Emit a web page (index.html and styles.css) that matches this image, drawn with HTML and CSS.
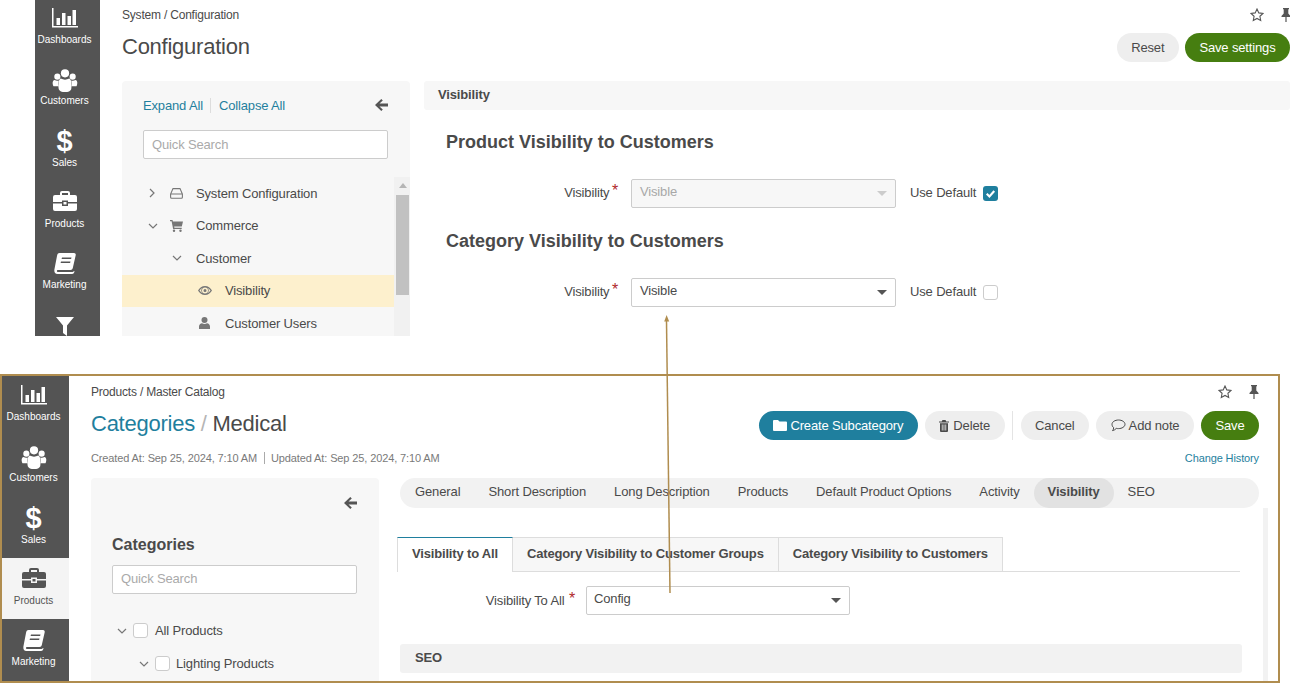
FILE: index.html
```html
<!DOCTYPE html>
<html>
<head>
    <title>Visibility configuration</title>
    <link rel="stylesheet" href="styles.css">
</head>
<body>
    <svg class="icon-defs" aria-hidden="true">
        <symbol id="i-bars" viewBox="0 0 26 20"><path d="M0 0h1.500v18H26v1.500H0zM4.500 10H8v7H4.500zM10 5h3.500v12H10zM15.500 8H19v9h-3.500zM20.500 2H24v15h-3.500z"/></symbol>
        <symbol id="i-users" viewBox="0 0 26 24"><circle cx="5" cy="8" r="3.200"/><circle cx="21" cy="8" r="3.200"/><circle cx="13" cy="4.500" r="4.300"/><path d="M1 18c-1.500-3-1-6 1-6.500 2 1 3 1 4.500.5-.8 2-1 4-.5 6zM25 18c1.500-3 1-6-1-6.500-2 1-3 1-4.500.5.800 2 1 4 .5 6zM6.500 21c-1-6 0-10 2-11 3 1.500 6 1.500 9 0 2 1 3 5 2 11-1 2-3 3-6.500 3s-5.500-1-6.500-3z"/></symbol>
        <symbol id="i-case" viewBox="0 0 24 20"><path fill-rule="evenodd" d="M7 4V2a2 2 0 0 1 2-2h6a2 2 0 0 1 2 2v2h5a2 2 0 0 1 2 2v5H15V9.500H9V11H0V6a2 2 0 0 1 2-2zm2-2v2h6V2zM0 12.500h9V15h6v-2.500h9V18a2 2 0 0 1-2 2H2a2 2 0 0 1-2-2zM10.500 11h3v2.500h-3z"/></symbol>
        <symbol id="i-book" viewBox="0 0 22 21"><path fill-rule="evenodd" d="M5.500 0H20c1.300 0 2 1 1.700 2.300L18.800 15c-.3 1.300-1 2-2.300 2H4c-1.500 0-1.500 2 0 2h14.500c.6 0 1-.2 1.200-.7l.8-.3c-.2 1.700-1 3-2.500 3H3.500C1 21 0 19 .4 16.500L3 3c.3-1.800 1-3 2.500-3zM8 4.500l-.4 1.500h9.500l.4-1.500zM7 8.500l-.4 1.500h9.500l.4-1.500z"/></symbol>
        <symbol id="i-filter" viewBox="0 0 18 19"><path d="M0 0h18l-7 8.500V19l-4-3V8.500z"/></symbol>
        <symbol id="i-star" viewBox="0 0 14 14"><path fill="none" stroke="currentColor" stroke-width="1.100" d="M7 1l1.800 3.900 4.200.5-3.100 2.900.8 4.200L7 10.400l-3.700 2.100.8-4.200L1 5.400l4.200-.5z"/></symbol>
        <symbol id="i-pin" viewBox="0 0 10 14"><path d="M2 0h6v1.200H7.300v4.300L9.500 8v1H5.600v5H4.400V9H.5V8l2.200-2.500V1.200H2z"/></symbol>
        <symbol id="i-back" viewBox="0 0 13 12"><path d="M6.300 0l1.500 1.500L4.500 4.400H13v3.200H4.500l3.300 2.900L6.300 12 0 6z"/></symbol>
        <symbol id="i-right" viewBox="0 0 8 10"><path fill="none" stroke="currentColor" stroke-width="1.200" d="M2 1l4 4-4 4"/></symbol>
        <symbol id="i-down" viewBox="0 0 10 8"><path fill="none" stroke="currentColor" stroke-width="1.200" d="M1 2l4 4 4-4"/></symbol>
        <symbol id="i-drive" viewBox="0 0 13 11"><path fill="none" stroke="currentColor" stroke-width="1.100" d="M3 .6h7l2.400 5.400v3.200a1 1 0 0 1-1 1H1.600a1 1 0 0 1-1-1V6zM.6 6h11.800"/></symbol>
        <symbol id="i-cart" viewBox="0 0 13 12"><path d="M0 0h2.500l.4 1.500H13l-1.200 5H4.200l.2 1.200h7.300V9H3.100L1.600 1.300H0z"/><circle cx="4" cy="10.800" r="1.200"/><circle cx="10.500" cy="10.800" r="1.200"/></symbol>
        <symbol id="i-eye" viewBox="0 0 14 9"><path fill-rule="evenodd" d="M7 0c3 0 5.500 2 7 4.500C12.500 7 10 9 7 9S1.500 7 0 4.500C1.500 2 4 0 7 0zm0 1.500a3 3 0 1 0 0 6 3 3 0 0 0 0-6zM1.500 4.500C2.300 5.700 3.300 6.600 4.500 7.200a4 4 0 0 1 0-5.400C3.300 2.400 2.300 3.300 1.500 4.500zm11 0c-.8-1.200-1.800-2.100-3-2.700a4 4 0 0 1 0 5.400c1.200-.6 2.200-1.500 3-2.700zM7 3a1.500 1.500 0 1 1 0 3 1.500 1.500 0 0 1 0-3z"/></symbol>
        <symbol id="i-user" viewBox="0 0 11 12"><circle cx="5.500" cy="3" r="3"/><path d="M0 12V9.500C0 7.500 1.500 6.500 3 6.300c1.500 1 3.500 1 5 0 1.500.2 3 1.200 3 3.200V12z"/></symbol>
        <symbol id="i-folder" viewBox="0 0 14 11"><path d="M1 0h4l1.500 1.500H13a1 1 0 0 1 1 1V10a1 1 0 0 1-1 1H1a1 1 0 0 1-1-1V1a1 1 0 0 1 1-1z"/></symbol>
        <symbol id="i-trash" viewBox="0 0 10 12"><path fill-rule="evenodd" d="M0 1.500h2.700L3.500 0h3l.8 1.500H10v1H0zM1 3.200h8V11a1 1 0 0 1-1 1H2a1 1 0 0 1-1-1zM2.800 4.500v6h.8v-6zM4.600 4.500v6h.8v-6zM6.400 4.500v6h.8v-6z"/></symbol>
        <symbol id="i-note" viewBox="0 0 15 13"><path fill="none" stroke="currentColor" stroke-width="1" d="M7.500 1C11 1 14 2.900 14 5.300S11 9.600 7.500 9.600c-.8 0-1.500 0-2.200-.2C4.300 10.600 3 11.300 1.500 11.600c.7-.8 1.200-1.700 1.200-2.900C1.600 7.900 1 6.700 1 5.300 1 2.900 4 1 7.500 1z"/></symbol>
    </svg>

    <section class="shot shot-config">
        <nav class="nav">
            <a class="nav-item"><svg class="nav-icon bars"><use href="#i-bars"/></svg>Dashboards</a>
            <a class="nav-item"><svg class="nav-icon users"><use href="#i-users"/></svg>Customers</a>
            <a class="nav-item"><span class="nav-icon dollar">$</span>Sales</a>
            <a class="nav-item"><svg class="nav-icon case"><use href="#i-case"/></svg>Products</a>
            <a class="nav-item"><svg class="nav-icon book"><use href="#i-book"/></svg>Marketing</a>
            <a class="nav-item"><svg class="nav-icon filter"><use href="#i-filter"/></svg></a>
        </nav>
        <div class="main">
            <div class="crumb-row">
                <span class="crumbs">System / Configuration</span>
                <span class="page-tools">
                    <svg class="tool-star"><use href="#i-star"/></svg>
                    <svg class="tool-pin"><use href="#i-pin"/></svg>
                </span>
            </div>
            <div class="title-row">
                <h1 class="page-title">Configuration</h1>
                <div class="actions">
                    <button class="btn">Reset</button>
                    <button class="btn btn-green">Save settings</button>
                </div>
            </div>
            <div class="config-body">
                <aside class="tree-panel">
                    <div class="tree-links">
                        <a>Expand All</a><a class="second-link">Collapse All</a>
                        <svg class="back-icon"><use href="#i-back"/></svg>
                    </div>
                    <div class="search-box">Quick Search</div>
                    <div class="tree-wrap">
                        <ul class="tree">
                            <li class="tree-row"><svg class="chev-r"><use href="#i-right"/></svg><svg class="tree-icon drive"><use href="#i-drive"/></svg>System Configuration</li>
                            <li class="tree-row"><svg class="chev-d"><use href="#i-down"/></svg><svg class="tree-icon cart"><use href="#i-cart"/></svg>Commerce</li>
                            <li class="tree-row level-2"><svg class="chev-d"><use href="#i-down"/></svg>Customer</li>
                            <li class="tree-row level-3 selected"><svg class="tree-icon eye"><use href="#i-eye"/></svg>Visibility</li>
                            <li class="tree-row level-3"><svg class="tree-icon user"><use href="#i-user"/></svg>Customer Users</li>
                        </ul>
                        <div class="scrollbar"><span class="scroll-up"></span><span class="scroll-thumb"></span></div>
                    </div>
                </aside>
                <div class="config-content">
                    <div class="section-bar">Visibility</div>
                    <h3 class="form-heading first">Product Visibility to Customers</h3>
                    <div class="form-row">
                        <label class="form-label">Visibility <i class="req">*</i></label>
                        <div class="select disabled">Visible<span class="caret"></span></div>
                        <span class="use-default">Use Default</span>
                        <span class="check checked"><svg viewBox="0 0 14 14"><path d="M3.500 7.200l2.500 2.500 4.500-5" fill="none" stroke="#fff" stroke-width="2"/></svg></span>
                    </div>
                    <h3 class="form-heading">Category Visibility to Customers</h3>
                    <div class="form-row">
                        <label class="form-label">Visibility <i class="req">*</i></label>
                        <div class="select">Visible<span class="caret"></span></div>
                        <span class="use-default">Use Default</span>
                        <span class="check"></span>
                    </div>
                </div>
            </div>
        </div>
    </section>

    <section class="shot shot-category">
        <nav class="nav">
            <a class="nav-item"><svg class="nav-icon bars"><use href="#i-bars"/></svg>Dashboards</a>
            <a class="nav-item"><svg class="nav-icon users"><use href="#i-users"/></svg>Customers</a>
            <a class="nav-item"><span class="nav-icon dollar">$</span>Sales</a>
            <a class="nav-item active"><svg class="nav-icon case"><use href="#i-case"/></svg>Products</a>
            <a class="nav-item"><svg class="nav-icon book"><use href="#i-book"/></svg>Marketing</a>
        </nav>
        <div class="main">
            <div class="crumb-row">
                <span class="crumbs">Products / Master Catalog</span>
                <span class="page-tools">
                    <svg class="tool-star"><use href="#i-star"/></svg>
                    <svg class="tool-pin"><use href="#i-pin"/></svg>
                </span>
            </div>
            <div class="title-row">
                <h1 class="page-title"><a class="title-link">Categories</a> <span class="title-sep">/</span> Medical</h1>
                <div class="actions">
                    <button class="btn btn-teal"><svg class="btn-icon folder"><use href="#i-folder"/></svg>Create Subcategory</button>
                    <button class="btn"><svg class="btn-icon trash"><use href="#i-trash"/></svg>Delete</button>
                    <span class="actions-sep"></span>
                    <button class="btn">Cancel</button>
                    <button class="btn"><svg class="btn-icon note"><use href="#i-note"/></svg>Add note</button>
                    <button class="btn btn-green">Save</button>
                </div>
            </div>
            <div class="meta-row">
                <span>Created At: Sep 25, 2024, 7:10 AM</span>
                <span class="meta-second">Updated At: Sep 25, 2024, 7:10 AM</span>
                <a class="history">Change History</a>
            </div>
            <div class="category-body">
                <aside class="tree-panel">
                    <div class="panel-back"><svg class="back-icon"><use href="#i-back"/></svg></div>
                    <h3 class="panel-heading">Categories</h3>
                    <div class="search-box">Quick Search</div>
                    <ul class="cat-tree">
                        <li class="cat-row"><svg class="chev-d"><use href="#i-down"/></svg><span class="check plain"></span>All Products</li>
                        <li class="cat-row sub"><svg class="chev-d"><use href="#i-down"/></svg><span class="check plain"></span>Lighting Products</li>
                    </ul>
                </aside>
                <div class="category-content">
                    <div class="pill-tabs">
                        <a class="pill-tab">General</a>
                        <a class="pill-tab">Short Description</a>
                        <a class="pill-tab">Long Description</a>
                        <a class="pill-tab">Products</a>
                        <a class="pill-tab">Default Product Options</a>
                        <a class="pill-tab">Activity</a>
                        <a class="pill-tab current">Visibility</a>
                        <a class="pill-tab">SEO</a>
                    </div>
                    <div class="pane">
                        <div class="sub-tabs">
                            <a class="sub-tab current">Visibility to All</a>
                            <a class="sub-tab">Category Visibility to Customer Groups</a>
                            <a class="sub-tab">Category Visibility to Customers</a>
                        </div>
                        <div class="form-row all-row">
                            <label class="form-label">Visibility To All <i class="req">*</i></label>
                            <div class="select">Config<span class="caret"></span></div>
                        </div>
                        <div class="seo-bar">SEO</div>
                    </div>
                </div>
            </div>
        </div>
    </section>

    <svg class="link-arrow" viewBox="0 0 12 282">
        <path d="M2.500 6L6 278" fill="none" stroke="#b08d4f" stroke-width="1.500"/>
        <path d="M2.600 0L.2 6.500h5z" fill="#b08d4f"/>
    </svg>
</body>
</html>
```

FILE: styles.css
```css
* {
    box-sizing: border-box;
}
html, body {
    margin: 0;
    height: 683px;
    overflow: hidden;
    background: #fff;
}
body {
    position: relative;
    font-family: "Liberation Sans", sans-serif;
    font-size: 13px;
    letter-spacing: -.15px;
    color: #4a4a4a;
}
ul {
    list-style: none;
    margin: 0;
    padding: 0;
}
h1, h3 {
    margin: 0;
}
.icon-defs {
    position: absolute;
    width: 0;
    height: 0;
}

/* the two screenshots sit on a free canvas */
.shot {
    position: absolute;
    display: flex;
    overflow: hidden;
    background: #fff;
}
.shot-config {
    left: 35px;
    top: 0;
    width: 1255px;
    height: 336px;
}
.shot-category {
    left: 0;
    top: 374px;
    width: 1280px;
    height: 309px;
    border: 2px solid #b08d4f;
}
.link-arrow {
    position: absolute;
    left: 664px;
    top: 315px;
    width: 12px;
    height: 282px;
}

/* side nav, cropped on the left in both pictures */
.nav {
    flex: none;
    display: flex;
    flex-direction: column;
    width: 71px;
    background: #545454;
}
.shot-config .nav {
    margin: -2.6px 0 0 -6px;
}
.shot-category .nav {
    margin: -1.6px 0 0 -4px;
}
.nav-item {
    flex: none;
    display: flex;
    flex-direction: column;
    align-items: center;
    height: 61.25px;
    font-size: 10px;
    letter-spacing: 0;
    color: #fff;
    fill: #fff;
}
.nav-item.active {
    background: #f4f4f4;
    color: #545454;
    fill: #545454;
}
.nav-icon {
    display: block;
}
.bars {
    width: 26px;
    height: 20px;
    margin: 11px 0 6px;
}
.users {
    width: 26px;
    height: 23px;
    margin: 10px 0 3px;
}
.dollar {
    height: 26px;
    margin: 8px 0 3px;
    font-size: 29px;
    line-height: 26px;
    font-weight: 700;
}
.case {
    width: 24px;
    height: 20px;
    margin: 10px 0 7px;
}
.book {
    width: 22px;
    height: 21px;
    margin: 11px 0 5px;
}
.filter {
    width: 18px;
    height: 19px;
    margin: 13px 0 0;
}

/* page header */
.main {
    flex: 1;
    min-width: 0;
    padding-left: 22px;
}
.shot-category .main {
    padding-right: 19px;
}
.crumb-row {
    display: flex;
    justify-content: space-between;
    align-items: center;
    height: 15px;
    margin-top: 7px;
    font-size: 12px;
    letter-spacing: -.2px;
}
.shot-category .crumb-row {
    margin-top: 8px;
}
.page-tools {
    display: flex;
    align-items: center;
    gap: 17px;
    fill: #555;
    color: #555;
}
.tool-star {
    width: 14px;
    height: 14px;
}
.tool-pin {
    width: 10px;
    height: 14px;
}
.shot-config .page-tools {
    margin-right: -1px;
}
.title-row {
    display: flex;
    justify-content: space-between;
    align-items: center;
    height: 29px;
    margin-top: 11px;
}
.shot-category .title-row {
    margin-top: 12px;
}
.page-title {
    padding-bottom: 2px;
    font-size: 22px;
    font-weight: 400;
    line-height: 27px;
    letter-spacing: -.25px;
}
.shot-category .page-title {
    padding-bottom: 4px;
}
.title-link {
    color: #1f7f9e;
}
.title-sep {
    color: #b5b5b5;
}
.actions {
    display: flex;
    align-items: center;
    gap: 7px;
}
.btn {
    display: flex;
    align-items: center;
    height: 29px;
    padding: 0 14.5px;
    border: none;
    border-radius: 15px;
    background: #eee;
    color: #4a4a4a;
    font-family: inherit;
    font-size: 13px;
    letter-spacing: inherit;
}
.btn-green {
    background: #467e10;
    color: #fff;
}
.btn-teal {
    background: #1f7f9e;
    color: #fff;
    fill: #fff;
}
.btn-icon {
    margin-right: 3px;
    fill: #4a4a4a;
    color: #4a4a4a;
}
.btn-teal .btn-icon {
    fill: #fff;
}
.folder {
    width: 14px;
    height: 11px;
}
.trash {
    width: 10px;
    height: 12px;
    margin-right: 4px;
}
.note {
    width: 15px;
    height: 13px;
    fill: none;
}
.actions-sep {
    width: 1px;
    height: 29px;
    margin-right: 1px;
    background: #e4e4e4;
}
.shot-config .actions {
    gap: 6px;
}
.meta-row {
    display: flex;
    align-items: center;
    height: 14px;
    margin-top: 11px;
    font-size: 11px;
    letter-spacing: -.12px;
    color: #7a7a7a;
}
.meta-second {
    margin-left: 7px;
    padding-left: 6px;
    border-left: 1px solid #aaa;
}
.history {
    margin-left: auto;
    color: #1f7f9e;
}

/* config page body */
.config-body {
    display: flex;
    gap: 14px;
    margin-top: 19px;
}
.tree-panel {
    position: relative;
    flex: none;
    width: 288px;
    height: 400px;
    border-radius: 4px;
    background: #f7f7f7;
}
.tree-links {
    display: flex;
    align-items: center;
    height: 16px;
    margin: 16px 22px 0 21px;
    color: #1f7f9e;
}
.second-link {
    margin-left: 7px;
    padding-left: 8px;
    border-left: 1px solid #ddd;
}
.back-icon {
    width: 13px;
    height: 12px;
    fill: #555;
}
.tree-links .back-icon {
    margin-left: auto;
}
.search-box {
    height: 29px;
    margin: 17px 22px 0 21px;
    padding: 0 8px;
    border: 1px solid #ccc;
    border-radius: 2px;
    background: #fff;
    color: #aaa;
    line-height: 27px;
}
.tree-wrap {
    display: flex;
    margin-top: 18px;
}
.tree {
    flex: 1;
}
.tree-row {
    display: flex;
    align-items: center;
    height: 32.500px;
    padding-left: 26px;
}
.tree-row.level-2 {
    padding-left: 50px;
}
.tree-row.level-3 {
    padding-left: 76px;
}
.tree-row.selected {
    background: #fdf0cd;
}
.chev-r {
    width: 8px;
    height: 10px;
    margin-right: 14px;
    color: #777;
}
.chev-d {
    flex: none;
    width: 10px;
    height: 8px;
    margin-right: 14px;
    color: #777;
}
.tree-row:nth-child(2) .chev-d {
    margin-right: 12px;
}
.tree-icon {
    flex: none;
    margin-right: 13px;
    fill: #777;
    color: #777;
}
.drive {
    width: 13px;
    height: 11px;
}
.cart {
    width: 13px;
    height: 12px;
}
.eye {
    width: 14px;
    height: 9px;
}
.user {
    width: 11px;
    height: 12px;
    margin: 0 15px 0 1px;
}
.scrollbar {
    flex: none;
    width: 16px;
    height: 160px;
    padding: 6px 1px 0 2px;
    background: #f1f1f1;
}
.scroll-up {
    display: block;
    width: 0;
    height: 0;
    margin: 0 auto 7px;
    border: 4px solid transparent;
    border-top: none;
    border-bottom: 5px solid #b5b5b5;
}
.scroll-thumb {
    display: block;
    height: 100px;
    background: #c1c1c1;
}
.config-content {
    flex: 1;
    min-width: 0;
}
.section-bar {
    height: 29px;
    padding-left: 14px;
    border-radius: 3px;
    background: #f7f7f7;
    font-weight: 700;
    line-height: 27px;
}
.form-heading {
    height: 22px;
    margin: 22px 0 0 22px;
    font-size: 18px;
    line-height: 22px;
    font-weight: 700;
    letter-spacing: 0;
}
.form-heading.first {
    margin-top: 21px;
}
.form-row {
    display: flex;
    align-items: center;
    height: 29px;
    margin-top: 26px;
}
.form-label {
    flex: none;
    width: 207px;
    padding: 0 13px 3px 0;
    text-align: right;
}
.req {
    position: relative;
    top: -1px;
    margin-left: -1px;
    color: #b02a2a;
    font-style: normal;
    font-size: 16px;
    line-height: 1;
}
.select {
    position: relative;
    flex: none;
    width: 265px;
    height: 29px;
    padding-left: 8px;
    border: 1px solid #ccc;
    border-radius: 2px;
    background: #fff;
    line-height: 23px;
}
.select.disabled {
    background: #f7f7f7;
    color: #a8a8a8;
}
.caret {
    position: absolute;
    right: 8px;
    top: 11px;
    width: 0;
    height: 0;
    border: 5px solid transparent;
    border-bottom: none;
    border-top: 5px solid #555;
}
.disabled .caret {
    border-top-color: #ccc;
}
.use-default {
    margin-left: 14px;
    padding-bottom: 3px;
}
.check {
    flex: none;
    display: block;
    width: 15px;
    height: 15px;
    margin: 0 0 0 7px;
    border: 1px solid #ccc;
    border-radius: 3px;
    background: #fff;
}
.check.checked {
    border: none;
    background: #1f7f9e;
}
.check svg {
    display: block;
}

/* category page body */
.category-body {
    display: flex;
    margin-top: 13px;
}
.panel-back {
    display: flex;
    justify-content: flex-end;
    height: 12px;
    margin: 19px 22px 0 0;
}
.panel-heading {
    margin: 26px 0 0 21px;
    font-size: 16px;
    line-height: 20px;
    letter-spacing: 0;
}
.shot-category .search-box {
    margin-top: 10px;
    line-height: 25px;
}
.cat-tree {
    margin-top: 20px;
}
.cat-row {
    display: flex;
    align-items: center;
    height: 33px;
    padding-left: 26px;
}
.cat-row.sub {
    padding-left: 48px;
}
.cat-row .chev-d {
    margin-right: 6px;
}
.check.plain {
    margin: 0 7px 0 0;
}
.sub .check.plain {
    margin-right: 6px;
}
.category-content {
    flex: 1;
    min-width: 0;
    padding-left: 21px;
}
.pill-tabs {
    display: flex;
    height: 30px;
    padding-left: 1px;
    border-radius: 15px;
    background: #f2f2f2;
    line-height: 28px;
    letter-spacing: -.12px;
}
.pill-tab {
    padding: 0 14px;
}
.pill-tab.current {
    border-radius: 15px;
    background: #e2e2e2;
    font-weight: 700;
}
.pane {
    height: 180px;
    margin-left: -3px;
    margin-right: -9px;
    padding-top: 29px;
    border-right: 5px solid #f2f2f2;
    padding-right: 23px;
}
.sub-tabs {
    display: flex;
    height: 35px;
    border-bottom: 1px solid #ddd;
}
.sub-tab {
    height: 35px;
    padding: 0 14px;
    border: 1px solid #ddd;
    border-left: none;
    background: #f7f7f7;
    font-weight: 700;
    line-height: 32px;
    letter-spacing: -.17px;
}
.sub-tab.current {
    border-top-color: #1f7f9e;
    border-left: 1px solid #ddd;
    border-bottom: none;
    background: #fff;
}
.all-row {
    margin-top: 14px;
}
.all-row .form-label {
    width: 189px;
    padding: 0 11px 1px 0;
}
.all-row .req {
    margin-left: 1px;
}
.all-row .select {
    width: 264px;
    padding-left: 7px;
}
.seo-bar {
    height: 29px;
    margin: 29px -2px 0 3px;
    padding-left: 15px;
    border-radius: 3px;
    background: #f2f2f2;
    font-weight: 700;
    line-height: 27px;
}
```
